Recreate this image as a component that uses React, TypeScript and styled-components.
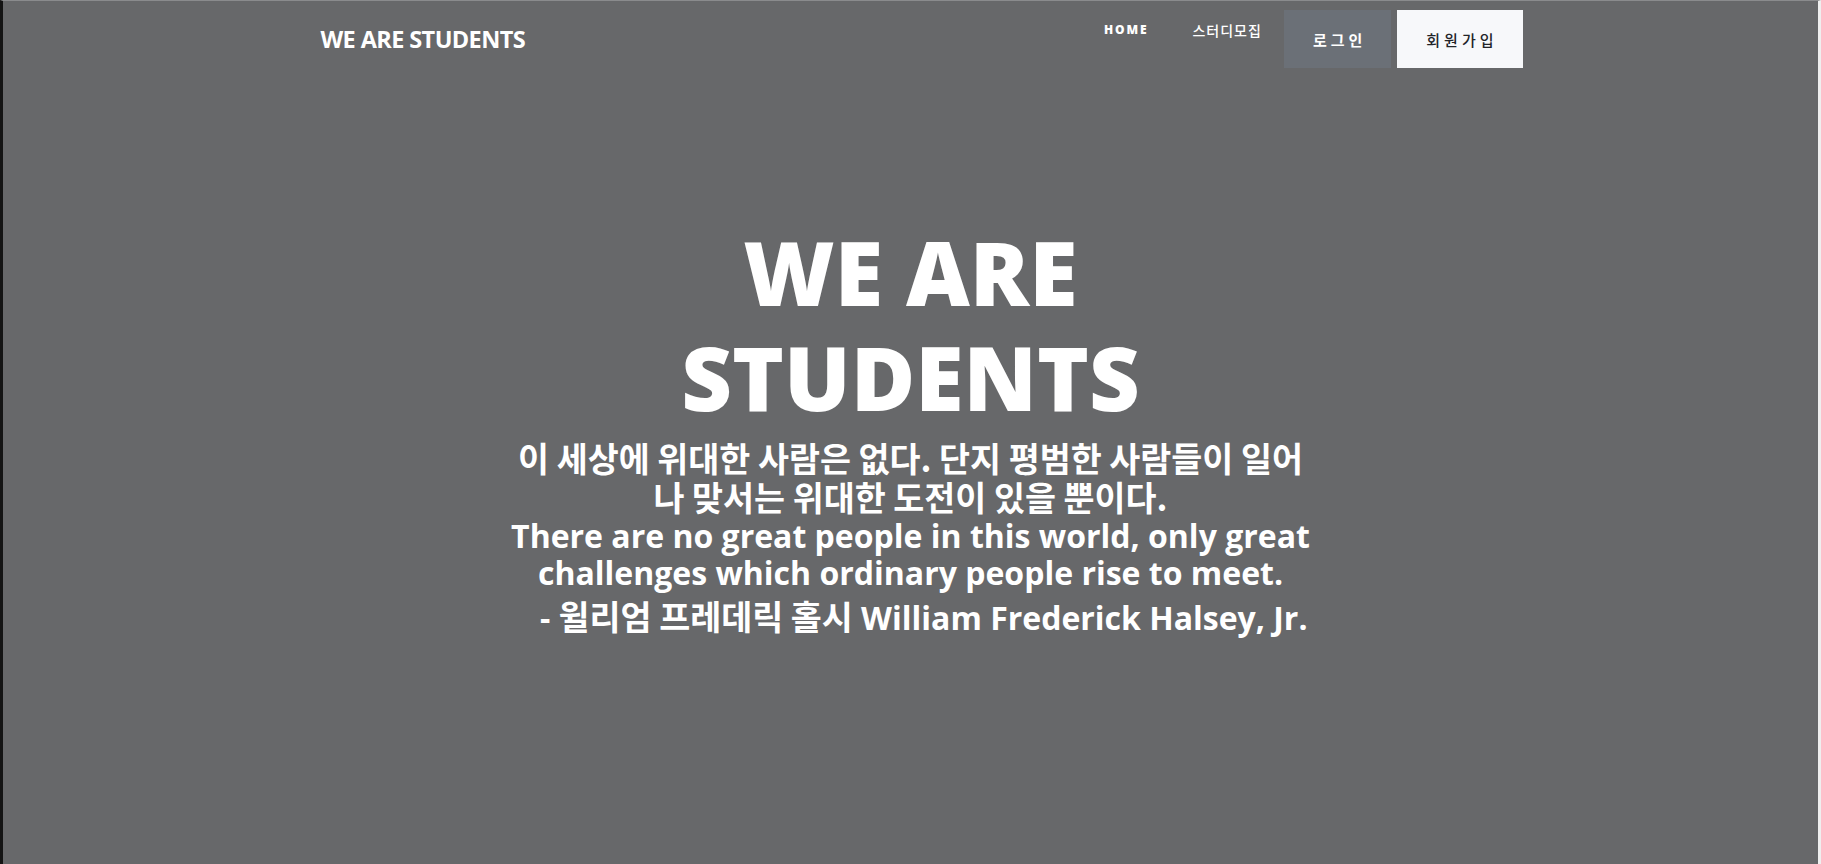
import React from "react";
import styled, { createGlobalStyle } from "styled-components";

const GlobalStyle = createGlobalStyle`
  html, body {
    margin: 0;
    padding: 0;
    background: #67686a;
  }
  * { box-sizing: border-box; }
`;

const Page = styled.div`
  height: 100vh;
  display: flex;
  flex-direction: column;
  background: #67686a;
  border-left: 3px solid #141414;
  border-right: 3px solid #efefef;
  border-top: 1px solid #8a8b8d;
  font-family: "Open Sans", "Noto Sans CJK KR", sans-serif;
  color: #ffffff;
  overflow: hidden;
`;

const Header = styled.header`
  flex: none;
  height: 77px;
  padding-top: 9px;
`;

const HeaderInner = styled.div`
  width: 1228px;
  margin: 0 auto;
  padding-left: 26px;
  display: flex;
  align-items: center;
  transform: translateX(-2px);
`;

const Logo = styled.div`
  font-family: "Open Sans", sans-serif;
  font-weight: 700;
  font-size: 23.5px;
  letter-spacing: -0.6px;
  color: #ffffff;
  margin-right: auto;
`;

const NavLink = styled.a<{ $upper?: boolean }>`
  align-self: flex-start;
  padding: 10px 22px;
  line-height: 20px;
  color: #ffffff;
  text-decoration: none;
  font-family: ${(p) => (p.$upper ? `"Open Sans", sans-serif` : `"Noto Sans CJK KR", sans-serif`)};
  font-weight: ${(p) => (p.$upper ? 800 : 500)};
  font-size: ${(p) => (p.$upper ? "12px" : "14px")};
  letter-spacing: ${(p) => (p.$upper ? "1.9px" : "1px")};
`;

const NavButton = styled.button<{ $light?: boolean }>`
  height: 58px;
  padding: 0 25px 0 29px;
  border: none;
  margin-left: ${(p) => (p.$light ? "6px" : "0")};
  background: ${(p) => (p.$light ? "#f7f8fa" : "#6b7077")};
  color: ${(p) => (p.$light ? "#222428" : "#ffffff")};
  font-family: "Noto Sans CJK KR", sans-serif;
  font-weight: ${(p) => (p.$light ? 500 : 700)};
  font-size: 15px;
  letter-spacing: 4px;
  cursor: pointer;
`;

const Hero = styled.main`
  flex: 1;
  display: flex;
  flex-direction: column;
  align-items: center;
  justify-content: center;
  padding-bottom: 86px;
  text-align: center;
`;

const Title = styled.h1`
  margin: 0;
  font-family: "Open Sans", sans-serif;
  font-weight: 800;
  font-size: 88px;
  line-height: 105px;
  color: #ffffff;
`;

const Quote = styled.div`
  width: 806px;
  margin-top: 9px;
  display: flex;
  flex-direction: column;
`;

const QuoteText = styled.p`
  margin: 0;
  font-family: "Open Sans", "Noto Sans CJK KR", sans-serif;
  font-weight: 700;
  font-size: 32px;
  line-height: 37px;
  color: #ffffff;
`;

const Hangul = styled.span`
  font-family: "Noto Sans CJK KR", sans-serif;
  font-size: 33.7px;
  font-weight: 700;
`;

const Attribution = styled.p`
  margin: 6px 0 0;
  text-align: right;
  padding-right: 6px;
  font-family: "Open Sans", "Noto Sans CJK KR", sans-serif;
  font-weight: 700;
  font-size: 32px;
  line-height: 37px;
  color: #ffffff;
`;

export default function App() {
  return (
    <>
      <GlobalStyle />
      <Page>
        <Header>
          <HeaderInner>
            <Logo>WE ARE STUDENTS</Logo>
            <NavLink $upper href="#">HOME</NavLink>
            <NavLink href="#">스터디모집</NavLink>
            <NavButton>로그인</NavButton>
            <NavButton $light>회원가입</NavButton>
          </HeaderInner>
        </Header>
        <Hero>
          <Title>
            WE ARE
            <br />
            STUDENTS
          </Title>
          <Quote>
            <QuoteText>
              <Hangul>
                이 세상에 위대한 사람은 없다. 단지 평범한 사람들이 일어나 맞서는 위대한 도전이 있을 뿐이다.
              </Hangul>
            </QuoteText>
            <QuoteText>
              There are no great people in this world, only great challenges which ordinary people rise to meet.
            </QuoteText>
            <Attribution>
              - <Hangul>윌리엄 프레데릭 홀시</Hangul> William Frederick Halsey, Jr.
            </Attribution>
          </Quote>
        </Hero>
      </Page>
    </>
  );
}
